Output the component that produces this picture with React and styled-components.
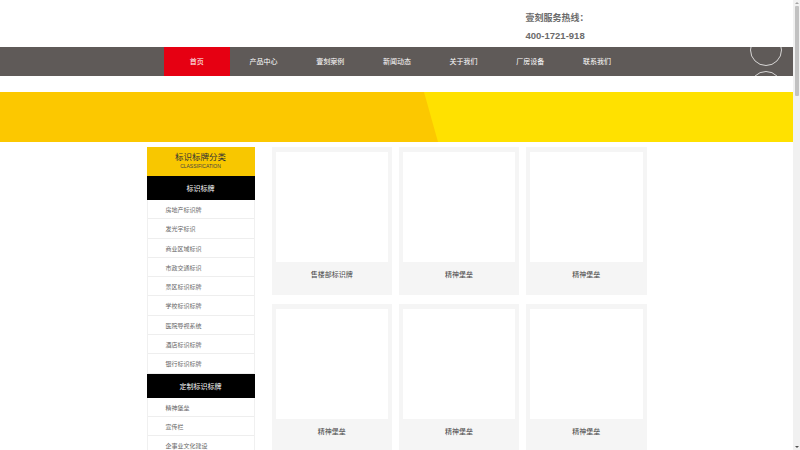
import React from 'react'
import styled, { createGlobalStyle } from 'styled-components'

const GlobalStyle = createGlobalStyle`
  html, body {
    margin: 0;
    padding: 0;
    background: #fff;
    font-family: "Noto Sans CJK SC", "Liberation Sans", sans-serif;
  }
  ::-webkit-scrollbar {
    display: none;
  }
`

const navItems = ['首页', '产品中心', '壹刻案例', '新闻动态', '关于我们', '厂房设备', '联系我们']

const groups = [
  {
    title: '标识标牌',
    items: ['房地产标识牌', '发光字标识', '商业区域标识', '市政交通标识', '景区标识标牌', '学校标识标牌', '医院导视系统', '酒店标识标牌', '银行标识标牌'],
  },
  {
    title: '定制标识标牌',
    items: ['精神堡垒', '宣传栏', '企事业文化建设', '广告灯箱', '指示牌'],
  },
]

const products = ['售楼部标识牌', '精神堡垒', '精神堡垒', '精神堡垒', '精神堡垒', '精神堡垒', '精神堡垒', '精神堡垒', '精神堡垒']

const App = () => {
  return <Page>
    <GlobalStyle />
    <Header>
      <Container>
        <Hotline>
          <span>壹刻服务热线：</span>
          <strong>400-1721-918</strong>
        </Hotline>
      </Container>
    </Header>
    <Nav>
      <Container>
        <NavList>
          {navItems.map((n, i) => <NavItem key={n} $active={i === 0}>{n}</NavItem>)}
        </NavList>
      </Container>
    </Nav>
    <FloatTools>
      <Circle />
      <Circle />
    </FloatTools>
    <Banner />
    <Main>
      <Container>
        <Body>
          <Sidebar>
            <SideHead>
              <h3>标识标牌分类</h3>
              <p>CLASSIFICATION</p>
            </SideHead>
            {groups.map(g => <React.Fragment key={g.title}>
              <GroupTitle>{g.title}</GroupTitle>
              {g.items.map(it => <SideItem key={it}>{it}</SideItem>)}
            </React.Fragment>)}
          </Sidebar>
          <Grid>
            {products.map((p, i) => <Card key={i}>
              <Thumb />
              <Caption>{p}</Caption>
            </Card>)}
          </Grid>
        </Body>
      </Container>
    </Main>
    <ScrollRail>
      <Arrow $dir="up" />
      <Thumb2 />
      <Arrow $dir="down" />
    </ScrollRail>
  </Page>
}

const Page = styled.div`
  min-height: 900px;
  padding-right: 7px;
`

const Container = styled.div`
  width: 500px;
  margin: 0 auto;
`

const Header = styled.header`
  height: 47px;
  ${Container} {
    display: flex;
    justify-content: flex-end;
  }
`

const Hotline = styled.div`
  width: 121px;
  padding-top: 11px;
  display: flex;
  flex-direction: column;
  gap: 5px;
  color: #6b6b6b;
  font-size: 9px;
  line-height: 13px;
  font-weight: bold;
  strong {
    font-family: "Liberation Sans", sans-serif;
    font-size: 9.5px;
  }
`

const Nav = styled.nav`
  height: 29px;
  background: #5f5a58;
`

const NavList = styled.ul`
  display: flex;
  margin: 0;
  padding: 0 0 0 17px;
  list-style: none;
`

const NavItem = styled.li`
  width: 66.7px;
  height: 29px;
  line-height: 29px;
  text-align: center;
  font-size: 7px;
  color: #fff;
  background: ${p => (p.$active ? '#e60012' : 'transparent')};
`

const FloatTools = styled.div`
  position: fixed;
  top: 34px;
  right: 18px;
  display: flex;
  flex-direction: column;
  gap: 5px;
`

const Circle = styled.span`
  display: block;
  width: 30px;
  height: 30px;
  border: 1px solid rgba(255, 255, 255, 0.75);
  border-radius: 50%;
`

const ScrollRail = styled.div`
  position: fixed;
  top: 0;
  right: 0;
  bottom: 0;
  width: 7px;
  background: #f1f1f1;
  display: flex;
  flex-direction: column;
  align-items: center;
`

const Arrow = styled.span`
  width: 0;
  height: 0;
  margin: 2px 0;
  border-left: 2px solid transparent;
  border-right: 2px solid transparent;
  ${p => (p.$dir === 'up'
    ? 'border-bottom: 2px solid #a3a3a3;'
    : 'border-top: 2px solid #505050; margin-top: auto;')}
`

const Thumb2 = styled.span`
  width: 4px;
  height: 90px;
  border-radius: 1px;
  background: #c1c1c1;
`

const Banner = styled.div`
  position: relative;
  margin-top: 16px;
  height: 50px;
  background: #ffe100;
  &::before {
    content: '';
    position: absolute;
    inset: 0;
    background: #fcc800;
    clip-path: polygon(0 0, 424px 0, 438px 100%, 0 100%);
  }
`

const Main = styled.main`
  padding-top: 5px;
`

const Body = styled.div`
  display: flex;
  align-items: flex-start;
  gap: 17px;
`

const Sidebar = styled.aside`
  width: 108px;
  flex-shrink: 0;
  border-left: 1px solid #f0f0f0;
  border-right: 1px solid #f0f0f0;
  box-sizing: border-box;
`

const SideHead = styled.div`
  height: 29px;
  margin: 0 -1px;
  background: #f8c700;
  text-align: center;
  padding-top: 4px;
  box-sizing: border-box;
  h3 {
    margin: 0;
    font-size: 8.5px;
    line-height: 11px;
    font-weight: normal;
    color: #333;
  }
  p {
    margin: 0;
    font-family: "Liberation Sans", sans-serif;
    font-size: 5px;
    line-height: 8px;
    color: #444;
  }
`

const GroupTitle = styled.div`
  height: 24px;
  margin: 0 -1px;
  line-height: 24px;
  background: #000;
  color: #fff;
  font-size: 7px;
  text-align: center;
`

const SideItem = styled.div`
  height: 19.3px;
  line-height: 19px;
  padding-left: 18px;
  border-bottom: 1px solid #eee;
  box-sizing: border-box;
  font-size: 6px;
  color: #666;
`

const Grid = styled.div`
  flex: 1;
  display: grid;
  grid-template-columns: repeat(3, 1fr);
  column-gap: 7px;
  row-gap: 9px;
`

const Card = styled.div`
  height: 148px;
  padding: 5px 4px 0;
  background: #f5f5f5;
  box-sizing: border-box;
`

const Thumb = styled.div`
  height: 110px;
  background: #fff;
`

const Caption = styled.div`
  padding-top: 7px;
  text-align: center;
  font-size: 7px;
  line-height: 10px;
  color: #444;
`

export default App
